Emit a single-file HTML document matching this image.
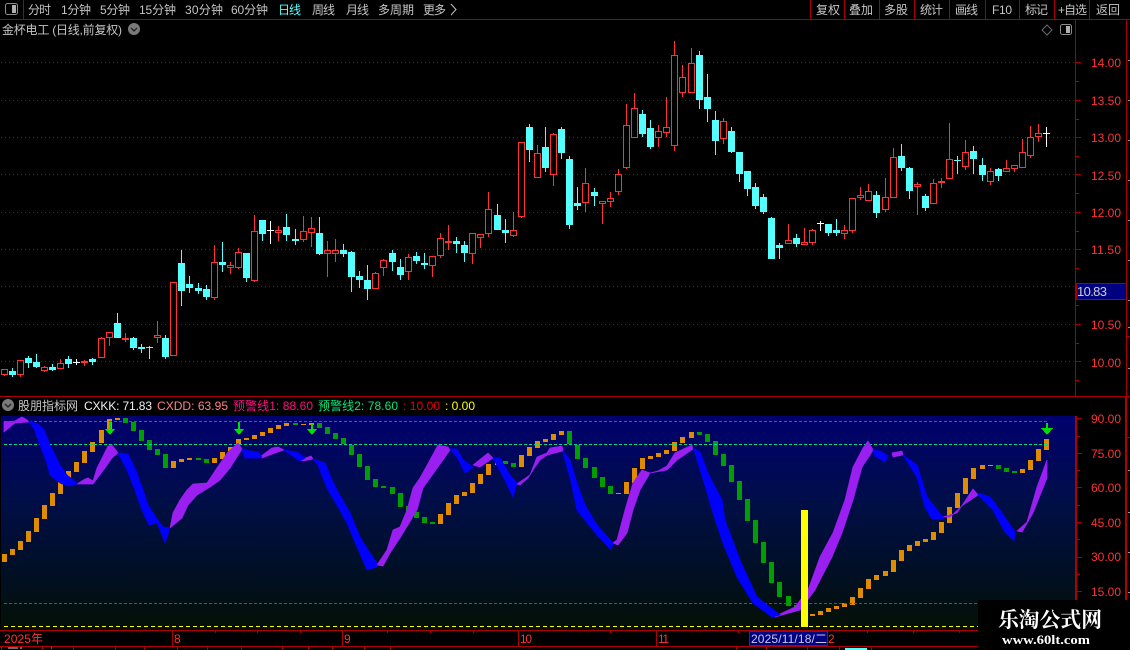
<!DOCTYPE html>
<html>
<head>
<meta charset="utf-8">
<title>股票K线</title>
<style>
html,body{margin:0;padding:0;background:#000;width:1130px;height:650px;overflow:hidden}
svg{display:block;position:absolute;left:0;top:0}
text{font-family:"Liberation Sans","Noto Sans CJK SC",sans-serif;font-size:12px}
.t{fill:#c4c4c4}
.a{fill:#ff3232;font-size:13px}
</style>
</head>
<body>
<svg width="1130" height="650" viewBox="0 0 1130 650" xmlns="http://www.w3.org/2000/svg">
<defs>
<linearGradient id="g" x1="0" y1="0" x2="0" y2="1">
<stop offset="0" stop-color="#00006e"/>
<stop offset=".4" stop-color="#000e48"/>
<stop offset=".7" stop-color="#000f28"/>
<stop offset="1" stop-color="#051005"/>
</linearGradient>
</defs>
<rect width="1130" height="650" fill="#000"/>

<!-- toolbar -->
<g fill="none" stroke="#a80000" shape-rendering="crispEdges">
<path d="M0 19.5H1130M23.5 0V19M810.5 0V19M844.5 0V19M879.5 0V19M914.5 0V19M949.5 0V19M985.5 0V19M1019.5 0V19M1054.5 0V19M1089.5 0V19"/>
</g>
<rect x="5.5" y="3.5" width="12" height="11" rx="2" fill="none" stroke="#8c8c8c"/>
<rect x="12" y="5" width="4" height="8" fill="#b0b0b0"/>
<g class="t">
<text x="28" y="14" textLength="23">分时</text>
<text x="61" y="14" textLength="30">1分钟</text>
<text x="100" y="14" textLength="30">5分钟</text>
<text x="139" y="14" textLength="37">15分钟</text>
<text x="185" y="14" textLength="38">30分钟</text>
<text x="231" y="14" textLength="37">60分钟</text>
<text x="278" y="14" textLength="23" fill="#54ffff" style="fill:#54ffff">日线</text>
<text x="312" y="14" textLength="23">周线</text>
<text x="346" y="14" textLength="23">月线</text>
<text x="378" y="14" textLength="36">多周期</text>
<text x="423" y="14" textLength="23">更多</text>
<text x="816" y="14" textLength="24">复权</text>
<text x="849" y="14" textLength="24">叠加</text>
<text x="884" y="14" textLength="24">多股</text>
<text x="920" y="14" textLength="23">统计</text>
<text x="955" y="14" textLength="23">画线</text>
<text x="992" y="14" textLength="20">F10</text>
<text x="1025" y="14" textLength="23">标记</text>
<text x="1058" y="14" textLength="29">+自选</text>
<text x="1096" y="14" textLength="24">返回</text>
<text x="2" y="34" textLength="120">金杯电工 (日线,前复权)</text>
</g>
<path d="M451 4L456 9.5L451 15" fill="none" stroke="#c0c0c0"/>
<circle cx="134" cy="29" r="6" fill="#7a7a7a"/>
<path d="M131 28L134 31L137 28" fill="none" stroke="#222" stroke-width="1.3"/>
<path d="M1047 25L1052 30L1047 35L1042 30Z" fill="none" stroke="#6c6c6c"/>
<rect x="1060.5" y="24.5" width="11" height="10" rx="2" fill="none" stroke="#8c8c8c"/>
<rect x="1066" y="26" width="4" height="7" fill="#b0b0b0"/>

<!-- price grid -->
<g stroke="#a00000" stroke-dasharray="1 3" shape-rendering="crispEdges">
<path d="M1 62.5H1075M1 100.5H1075M1 137.5H1075M1 174.5H1075M1 212.5H1075M1 249.5H1075M1 286.5H1075M1 324.5H1075M1 361.5H1075"/>
</g>

<!-- axis lines -->
<g stroke="#a80000" fill="none" shape-rendering="crispEdges">
<path d="M1075.5 20V397M1126.5 20V397M0 396.5H1130"/>
<path d="M1076 62.5H1081M1076 100.5H1081M1076 137.5H1081M1076 174.5H1081M1076 212.5H1081M1076 249.5H1081M1076 324.5H1081M1076 361.5H1081M1076 81.5H1079M1076 119.5H1079M1076 156.5H1079M1076 193.5H1079M1076 231.5H1079M1076 268.5H1079M1076 305.5H1079M1076 343.5H1079M1076 380.5H1079"/>
<path d="M1127 336.5H1130M1127 437.5H1130"/>
<path d="M1075.5 416V630M1076.5 416V630M1125.5 397V600M1126.5 397V600M0 630.5H978M0 646.5H978" stroke="#b00000"/>
<path d="M1077 418.5H1082M1077 453.5H1082M1077 487.5H1082M1077 522.5H1082M1077 557.5H1082M1077 591.5H1082M1077 436.5H1080M1077 470.5H1080M1077 505.5H1080M1077 539.5H1080M1077 574.5H1080"/>
</g>
<path d="M1128 60.5H1130M1128 100.5H1130M1128 140.5H1130M1128 180.5H1130M1128 220.5H1130M1128 260.5H1130M1128 300.5H1130M1128 327.5H1130M1128 368.5H1130M1128 470.5H1130M1128 512.5H1130M1128 552.5H1130M1128 592.5H1130" stroke="#999" shape-rendering="crispEdges"/>

<g class="a">
<text x="1091" y="67" textLength="30">14.00</text>
<text x="1091" y="105" textLength="30">13.50</text>
<text x="1091" y="142" textLength="30">13.00</text>
<text x="1091" y="180" textLength="30">12.50</text>
<text x="1091" y="217" textLength="30">12.00</text>
<text x="1091" y="254" textLength="30">11.50</text>
<text x="1091" y="329" textLength="30">10.50</text>
<text x="1091" y="367" textLength="30">10.00</text>
<text x="1091" y="423" textLength="30">90.00</text>
<text x="1091" y="458" textLength="30">75.00</text>
<text x="1091" y="492" textLength="30">60.00</text>
<text x="1091" y="527" textLength="30">45.00</text>
<text x="1091" y="561" textLength="30">30.00</text>
<text x="1091" y="596" textLength="30">15.00</text>
</g>
<rect x="1076.5" y="283.5" width="50" height="16" fill="#000080" stroke="#a80000" shape-rendering="crispEdges"/>
<text x="1077" y="296" textLength="30" style="font-size:13px;fill:#d0d0d0">10.83</text>

<!-- red candle wicks -->
<path stroke="#ff3232" fill="none" shape-rendering="crispEdges" d="M4.5 369V376M20.5 360V377M44.5 366V372M60.5 359V369M84.5 360V366M101.5 337V358M109.5 332V346M125.5 333V342M157.5 321V343M173.5 282V356M214.5 245V300M230.5 262V274M238.5 248V269M254.5 215V282M278.5 226V241M303.5 216V242M311.5 217V247M327.5 241V277M335.5 239V262M375.5 272V289M383.5 259V276M408.5 254V280M432.5 256V277M440.5 233V258M448.5 225V250M472.5 233V264M480.5 234V248M488.5 192V237M513.5 212V237M521.5 142V218M537.5 145V178M553.5 133V186M585.5 168V212M602.5 201V224M610.5 192V207M618.5 169V195M626.5 104V169M634.5 93V138M658.5 125V147M666.5 97V137M674.5 41V151M682.5 65V97M691.5 48V93M723.5 118V144M788.5 224V244M804.5 228V245M812.5 229V245M844.5 225V239M852.5 198V233M860.5 187V200M868.5 184V201M885.5 178V212M893.5 148V198M917.5 182V215M933.5 179V204M941.5 178V188M949.5 123V179M965.5 140V170M990.5 168V185M1006.5 160V172M1014.5 165V172M1022.5 139V168M1030.5 126V158M1038.5 124V142"/>
<!-- red candle bodies -->
<path stroke="#ff3232" fill="#000" shape-rendering="crispEdges" d="M1.5 369.5h6V374.5h-6zM17.5 360.5h6V374.5h-6zM41.5 367.5h6V370.5h-6zM57.5 363.5h6V368.5h-6zM81.5 361.5h6V362.5h-6zM98.5 338.5h6V357.5h-6zM106.5 332.5h6V337.5h-6zM122.5 338.5h6V339.5h-6zM154.5 335.5h6V337.5h-6zM170.5 282.5h6V355.5h-6zM211.5 262.5h6V297.5h-6zM227.5 265.5h6V267.5h-6zM235.5 252.5h6V267.5h-6zM251.5 231.5h6V280.5h-6zM275.5 230.5h6V232.5h-6zM300.5 231.5h6V239.5h-6zM308.5 228.5h6V232.5h-6zM324.5 250.5h6V253.5h-6zM332.5 250.5h6V253.5h-6zM372.5 273.5h6V288.5h-6zM380.5 260.5h6V267.5h-6zM405.5 257.5h6V271.5h-6zM429.5 256.5h6V265.5h-6zM437.5 238.5h6V255.5h-6zM445.5 241.5h6V242.5h-6zM469.5 233.5h6V253.5h-6zM477.5 234.5h6V237.5h-6zM485.5 209.5h6V233.5h-6zM510.5 230.5h6V235.5h-6zM518.5 142.5h6V216.5h-6zM534.5 153.5h6V177.5h-6zM550.5 134.5h6V174.5h-6zM582.5 183.5h6V202.5h-6zM599.5 201.5h6V203.5h-6zM607.5 198.5h6V201.5h-6zM615.5 174.5h6V191.5h-6zM623.5 125.5h6V167.5h-6zM631.5 108.5h6V137.5h-6zM655.5 131.5h6V137.5h-6zM663.5 127.5h6V132.5h-6zM671.5 55.5h6V145.5h-6zM679.5 77.5h6V92.5h-6zM688.5 63.5h6V92.5h-6zM720.5 121.5h6V138.5h-6zM785.5 240.5h6V243.5h-6zM801.5 242.5h6V244.5h-6zM809.5 230.5h6V242.5h-6zM841.5 230.5h6V233.5h-6zM849.5 198.5h6V230.5h-6zM857.5 195.5h6V197.5h-6zM865.5 191.5h6V200.5h-6zM882.5 197.5h6V209.5h-6zM890.5 157.5h6V197.5h-6zM914.5 184.5h6V186.5h-6zM930.5 183.5h6V203.5h-6zM938.5 181.5h6V182.5h-6zM946.5 159.5h6V178.5h-6zM962.5 152.5h6V166.5h-6zM987.5 171.5h6V181.5h-6zM1003.5 168.5h6V171.5h-6zM1011.5 165.5h6V168.5h-6zM1019.5 152.5h6V167.5h-6zM1027.5 137.5h6V155.5h-6zM1035.5 133.5h6V136.5h-6z"/>
<!-- cyan candles -->
<path stroke="#54ffff" fill="none" shape-rendering="crispEdges" d="M12.5 368V377M28.5 356V368M36.5 354V368M52.5 364V371M68.5 356V368M92.5 358V365M117.5 313V338M133.5 337V350M141.5 344V353M149.5 346V359M165.5 335V359M181.5 250V306M189.5 276V293M198.5 283V294M206.5 285V300M222.5 242V272M246.5 253V282M262.5 220V241M286.5 214V241M295.5 229V245M319.5 217V255M343.5 244V257M351.5 251V292M359.5 271V288M367.5 265V300M392.5 250V271M400.5 259V280M416.5 252V264M424.5 253V269M456.5 237V253M464.5 241V262M497.5 204V230M505.5 219V243M529.5 124V162M545.5 127V172M561.5 127V159M569.5 156V229M577.5 187V210M594.5 188V206M642.5 110V137M650.5 120V149M699.5 51V109M707.5 74V122M715.5 111V155M731.5 127V153M739.5 152V182M747.5 171V196M755.5 183V209M763.5 194V214M771.5 217V259M779.5 243V259M796.5 234V247M828.5 224V236M836.5 219V236M876.5 191V218M901.5 144V171M909.5 167V199M925.5 194V211M957.5 156V174M973.5 146V174M982.5 158V181M998.5 168V181"/>
<path fill="#54ffff" shape-rendering="crispEdges" d="M9 371h7V375h-7zM25 358h7V363h-7zM33 362h7V367h-7zM49 367h7V370h-7zM65 359h7V364h-7zM89 359h7V362h-7zM114 323h7V338h-7zM130 338h7V348h-7zM138 347h7V349h-7zM146 347h7V348h-7zM162 338h7V357h-7zM178 263h7V291h-7zM186 284h7V288h-7zM195 288h7V291h-7zM203 289h7V297h-7zM219 262h7V265h-7zM243 253h7V278h-7zM259 220h7V234h-7zM283 227h7V235h-7zM292 239h7V241h-7zM316 233h7V254h-7zM340 250h7V254h-7zM348 252h7V277h-7zM356 276h7V280h-7zM364 280h7V289h-7zM389 253h7V262h-7zM397 267h7V275h-7zM413 256h7V261h-7zM421 263h7V265h-7zM453 241h7V244h-7zM461 245h7V253h-7zM494 215h7V230h-7zM502 230h7V233h-7zM526 127h7V150h-7zM542 147h7V168h-7zM558 129h7V153h-7zM566 159h7V225h-7zM574 203h7V206h-7zM591 192h7V196h-7zM639 114h7V134h-7zM647 128h7V147h-7zM696 55h7V100h-7zM704 97h7V109h-7zM712 120h7V141h-7zM728 131h7V152h-7zM736 152h7V174h-7zM744 171h7V189h-7zM752 187h7V206h-7zM760 197h7V212h-7zM768 218h7V259h-7zM776 245h7V248h-7zM793 238h7V244h-7zM825 224h7V233h-7zM833 230h7V233h-7zM873 195h7V213h-7zM898 156h7V168h-7zM906 168h7V191h-7zM922 196h7V208h-7zM954 160h7V161h-7zM970 151h7V159h-7zM979 165h7V175h-7zM995 169h7V176h-7z"/>
<!-- white doji -->
<path stroke="#fff" fill="none" shape-rendering="crispEdges" d="M76.5 359V365M73 362.5H80M270.5 221V244M267 230.5H274M820.5 221V231M817 223.5H824M1046.5 127V147M1043 133.5H1050"/>

<!-- indicator title -->
<circle cx="8" cy="405" r="6" fill="#7a7a7a"/>
<path d="M5 404L8 407L11 404" fill="none" stroke="#222" stroke-width="1.3"/>
<text x="18" y="410" textLength="60" style="fill:#c8c8c8">股朋指标网</text>
<text x="84" y="410" textLength="68" style="fill:#f0f0f0">CXKK: 71.83</text>
<text x="157" y="410" textLength="71" style="fill:#ff8484">CXDD: 63.95</text>
<text x="233" y="410" textLength="80" style="fill:#ff0f80">预警线1: 88.60</text>
<text x="318" y="410" textLength="80" style="fill:#00e878">预警线2: 78.60</text>
<text x="403" y="410" textLength="37" style="fill:#f00000">: 10.00</text>
<text x="445" y="410" textLength="30" style="fill:#ffff00">: 0.00</text>

<!-- indicator background -->
<rect x="1" y="416" width="1074" height="214" fill="url(#g)"/>

<!-- orange bars -->
<path fill="#e08c00" shape-rendering="crispEdges" d="M2 554h5V562h-5zM10 549h5V555h-5zM18 541h5V550h-5zM26 531h5V542h-5zM34 518h5V532h-5zM42 505h5V519h-5zM50 493h5V506h-5zM58 481h5V494h-5zM66 471h5V481h-5zM74 462h5V472h-5zM82 451h5V463h-5zM90 442h5V452h-5zM99 430h5V443h-5zM107 419h5V429h-5zM115 418h5V420h-5zM171 461h5V468h-5zM179 459h5V462h-5zM187 458h5V460h-5zM212 458h5V463h-5zM220 452h5V459h-5zM228 447h5V453h-5zM236 439h5V445h-5zM244 438h5V440h-5zM252 435h5V439h-5zM260 432h5V436h-5zM268 428h5V433h-5zM276 425h5V429h-5zM284 423h5V426h-5zM301 424h5V425h-5zM309 423h5V425h-5zM438 514h5V524h-5zM446 503h5V515h-5zM454 495h5V504h-5zM462 492h5V496h-5zM470 483h5V493h-5zM478 474h5V484h-5zM486 464h5V475h-5zM495 462h5V465h-5zM519 455h5V467h-5zM527 447h5V456h-5zM535 441h5V448h-5zM543 439h5V442h-5zM551 434h5V440h-5zM559 431h5V435h-5zM616 493h5V494h-5zM624 482h5V494h-5zM632 468h5V483h-5zM640 458h5V469h-5zM648 456h5V459h-5zM656 453h5V457h-5zM664 450h5V454h-5zM672 442h5V451h-5zM680 437h5V443h-5zM689 432h5V438h-5zM810 614h5V616h-5zM818 611h5V615h-5zM826 608h5V612h-5zM834 606h5V609h-5zM842 603h5V607h-5zM850 597h5V605h-5zM858 588h5V598h-5zM866 579h5V589h-5zM874 575h5V580h-5zM883 571h5V576h-5zM891 560h5V572h-5zM899 550h5V561h-5zM907 545h5V551h-5zM915 541h5V546h-5zM923 539h5V542h-5zM931 532h5V540h-5zM939 522h5V533h-5zM947 507h5V523h-5zM955 493h5V508h-5zM963 478h5V494h-5zM971 468h5V479h-5zM980 465h5V469h-5zM988 465h5V466h-5zM1020 469h5V473h-5zM1028 460h5V470h-5zM1036 449h5V461h-5zM1044 439h5V450h-5z"/>
<!-- green bars -->
<path fill="#009e00" shape-rendering="crispEdges" d="M123 418h5V423h-5zM131 422h5V431h-5zM139 430h5V441h-5zM147 440h5V450h-5zM155 449h5V455h-5zM163 454h5V468h-5zM196 458h5V460h-5zM204 459h5V463h-5zM293 423h5V425h-5zM317 423h5V428h-5zM325 427h5V434h-5zM333 433h5V439h-5zM341 438h5V444h-5zM349 445h5V455h-5zM357 454h5V467h-5zM365 466h5V480h-5zM373 479h5V487h-5zM381 486h5V488h-5zM390 487h5V494h-5zM398 493h5V507h-5zM406 506h5V512h-5zM414 512h5V518h-5zM422 517h5V523h-5zM430 522h5V524h-5zM503 461h5V464h-5zM511 463h5V467h-5zM567 431h5V444h-5zM575 445h5V459h-5zM583 458h5V468h-5zM592 467h5V478h-5zM600 477h5V487h-5zM608 486h5V494h-5zM697 432h5V435h-5zM705 434h5V442h-5zM713 441h5V455h-5zM721 454h5V466h-5zM729 465h5V482h-5zM737 481h5V500h-5zM745 499h5V521h-5zM753 520h5V543h-5zM761 542h5V563h-5zM769 562h5V583h-5zM777 582h5V597h-5zM786 596h5V606h-5zM794 605h5V607h-5zM996 465h5V469h-5zM1004 468h5V472h-5zM1012 471h5V473h-5z"/>

<!-- dashed levels -->
<g fill="none" shape-rendering="crispEdges">
<path d="M4 421.5H1047" stroke="#e8107a" stroke-dasharray="3 2"/>
<path d="M4 444.5H1047" stroke="#00e080" stroke-dasharray="3 2"/>
<path d="M4 603.5H978" stroke="#d82020" stroke-dasharray="3 2"/>
<path d="M4 626.5H978" stroke="#ffff00" stroke-dasharray="4 3"/>
</g>

<!-- purple ribbon -->
<g fill="#9a1ff0" stroke="#9a1ff0" stroke-width=".8" stroke-linejoin="round">
<polygon points="4,422 15,421 22,417 27,420 29,422 15,423 4,432"/>
<polygon points="77,484 85,479 88,478 93,481 97,468 108,446 112,445 118,453 112,458 105,468 93,484"/>
<polygon points="170,528 173,513 180,500 187,490 193,484 207,483 217,468 228,452 238,443 242,449 230,468 220,480 210,487 197,495 188,505 182,518"/>
<polygon points="260,457 272,448 278,447 284,450 275,453 262,458"/>
<polygon points="300,460 311,456 313,459 303,461"/>
<polygon points="377,565 387,550 393,530 400,527 407,510 413,488 420,478 430,460 438,445 448,447 450,450 443,460 423,488 417,510 400,538 390,553 383,566"/>
<polygon points="473,465 488,453 493,458 480,467"/>
<polygon points="517,484 530,475 537,457 547,453 550,448 562,446 563,451 547,455 540,460 535,467 528,478 520,485"/>
<polygon points="613,543 617,540 625,510 633,483 642,470 650,473 658,471 667,466 675,453 692,445 693,449 677,460 667,470 650,473 640,490 633,510 627,533 618,545"/>
<polygon points="780,614 795,607 808,590 820,557 833,533 845,500 853,467 863,448 868,441 873,450 870,455 862,467 853,500 842,533 832,557 815,590 800,610 775,617"/>
<polygon points="892,453 902,451 903,455 893,457"/>
<polygon points="943,517 957,513 973,489 978,495 963,505 950,517"/>
<polygon points="1017,531 1027,522 1037,487 1047,460 1047,478 1033,513 1022,532"/>
</g>
<!-- blue ribbon -->
<g fill="#0000ff" stroke="#0000ff" stroke-width=".8" stroke-linejoin="round">
<polygon points="29,421 38,424 44,430 50,445 60,465 67,475 77,483 77,484 68,486 60,483 50,475 46,460 40,445 34,428 29,422"/>
<polygon points="118,453 128,454 137,473 143,490 148,505 157,519 163,527 170,528 165,543 160,530 157,523 149,525 142,510 135,490 127,470"/>
<polygon points="242,449 250,451 258,452 262,457 260,458 245,458"/>
<polygon points="284,450 297,452 305,458 300,461 287,452"/>
<polygon points="313,459 325,463 332,480 337,490 350,513 360,537 370,553 377,563 377,567 367,570 357,547 347,523 340,510 328,490 323,478 318,465"/>
<polygon points="450,449 457,449 463,460 473,467 465,473 457,457"/>
<polygon points="493,458 500,458 510,475 517,483 513,497 505,480"/>
<polygon points="563,451 570,460 577,483 585,505 597,525 613,543 611,550 597,535 577,510 570,477 563,453"/>
<polygon points="693,448 700,452 708,473 722,500 725,520 740,560 757,597 780,615 772,617 753,603 737,577 723,543 713,513 707,492 695,453"/>
<polygon points="873,450 880,451 888,456 885,462 875,456"/>
<polygon points="903,455 917,465 927,497 943,517 943,519 932,519 925,507 917,477"/>
<polygon points="978,493 990,497 1000,510 1015,532 1014,541 1005,532 993,510 978,495"/>
</g>

<!-- arrows -->
<g fill="#00e000" shape-rendering="crispEdges">
<path d="M109 422h2v7h4l-5 6l-5-6h4z"/>
<path d="M238 422h2v7h4l-5 6l-5-6h4z"/>
<path d="M311 424h2v5h4l-5 6l-5-6h4z"/>
<path d="M1046 423h2v5h5l-6 7l-6-7h5z"/>
</g>

<!-- yellow marker -->
<rect x="801" y="510" width="7" height="117" fill="#ffff00"/>

<!-- date axis -->
<g stroke="#b00000" fill="none" shape-rendering="crispEdges">
<path d="M172.5 631V646M342.5 631V646M518.5 631V646M656.5 631V646M215.5 631V633M257.5 631V633M300.5 631V633M387.5 631V633M430.5 631V633M473.5 631V633M610.5 631V633M738.5 631V633M867.5 631V633M913.5 631V633M959.5 631V633"/>
<path d="M1.5 647V650M42.5 647V650M73.5 647V650M115.5 647V650M144.5 647V650M177.5 647V650M207.5 647V650M241.5 647V650M282.5 647V650M308.5 647V650M332.5 647V650M364.5 647V650M390.5 647V650M736.5 647V650M766.5 647V650M807.5 647V650M839.5 647V650M871.5 647V650"/>
</g>
<g style="fill:#ff3232">
<text x="4" y="643" textLength="39" style="fill:#ff3232">2025年</text>
<text x="174" y="643" style="fill:#ff3232">8</text>
<text x="344" y="643" style="fill:#ff3232">9</text>
<text x="520" y="643" textLength="12" style="fill:#ff3232">10</text>
<text x="658" y="643" textLength="11" style="fill:#ff3232">11</text>
<text x="828" y="643" style="fill:#ff3232">2</text>
</g>
<rect x="749.5" y="631.5" width="78" height="14" fill="#000080" stroke="#b00000" shape-rendering="crispEdges"/>
<text x="751" y="643" textLength="76" style="fill:#c8c8e0">2025/11/18/二</text>
<path d="M8 648h10M20 648h2M51 648h1" stroke="#d0d0d0" shape-rendering="crispEdges"/>
<rect x="845" y="648" width="22" height="2" fill="#54ffff"/>

<!-- watermark -->
<rect x="978" y="600" width="152" height="50" fill="#000"/>
<text x="998" y="627" textLength="104" lengthAdjust="spacingAndGlyphs" style="font-family:'Noto Serif CJK SC','Liberation Serif',serif;font-size:21px;font-weight:700;fill:#fff">乐淘公式网</text>
<text x="1002" y="644" textLength="88" lengthAdjust="spacingAndGlyphs" style="font-family:'Liberation Serif',serif;font-size:13px;font-weight:700;fill:#fff">www.60lt.com</text>
</svg>
</body>
</html>
